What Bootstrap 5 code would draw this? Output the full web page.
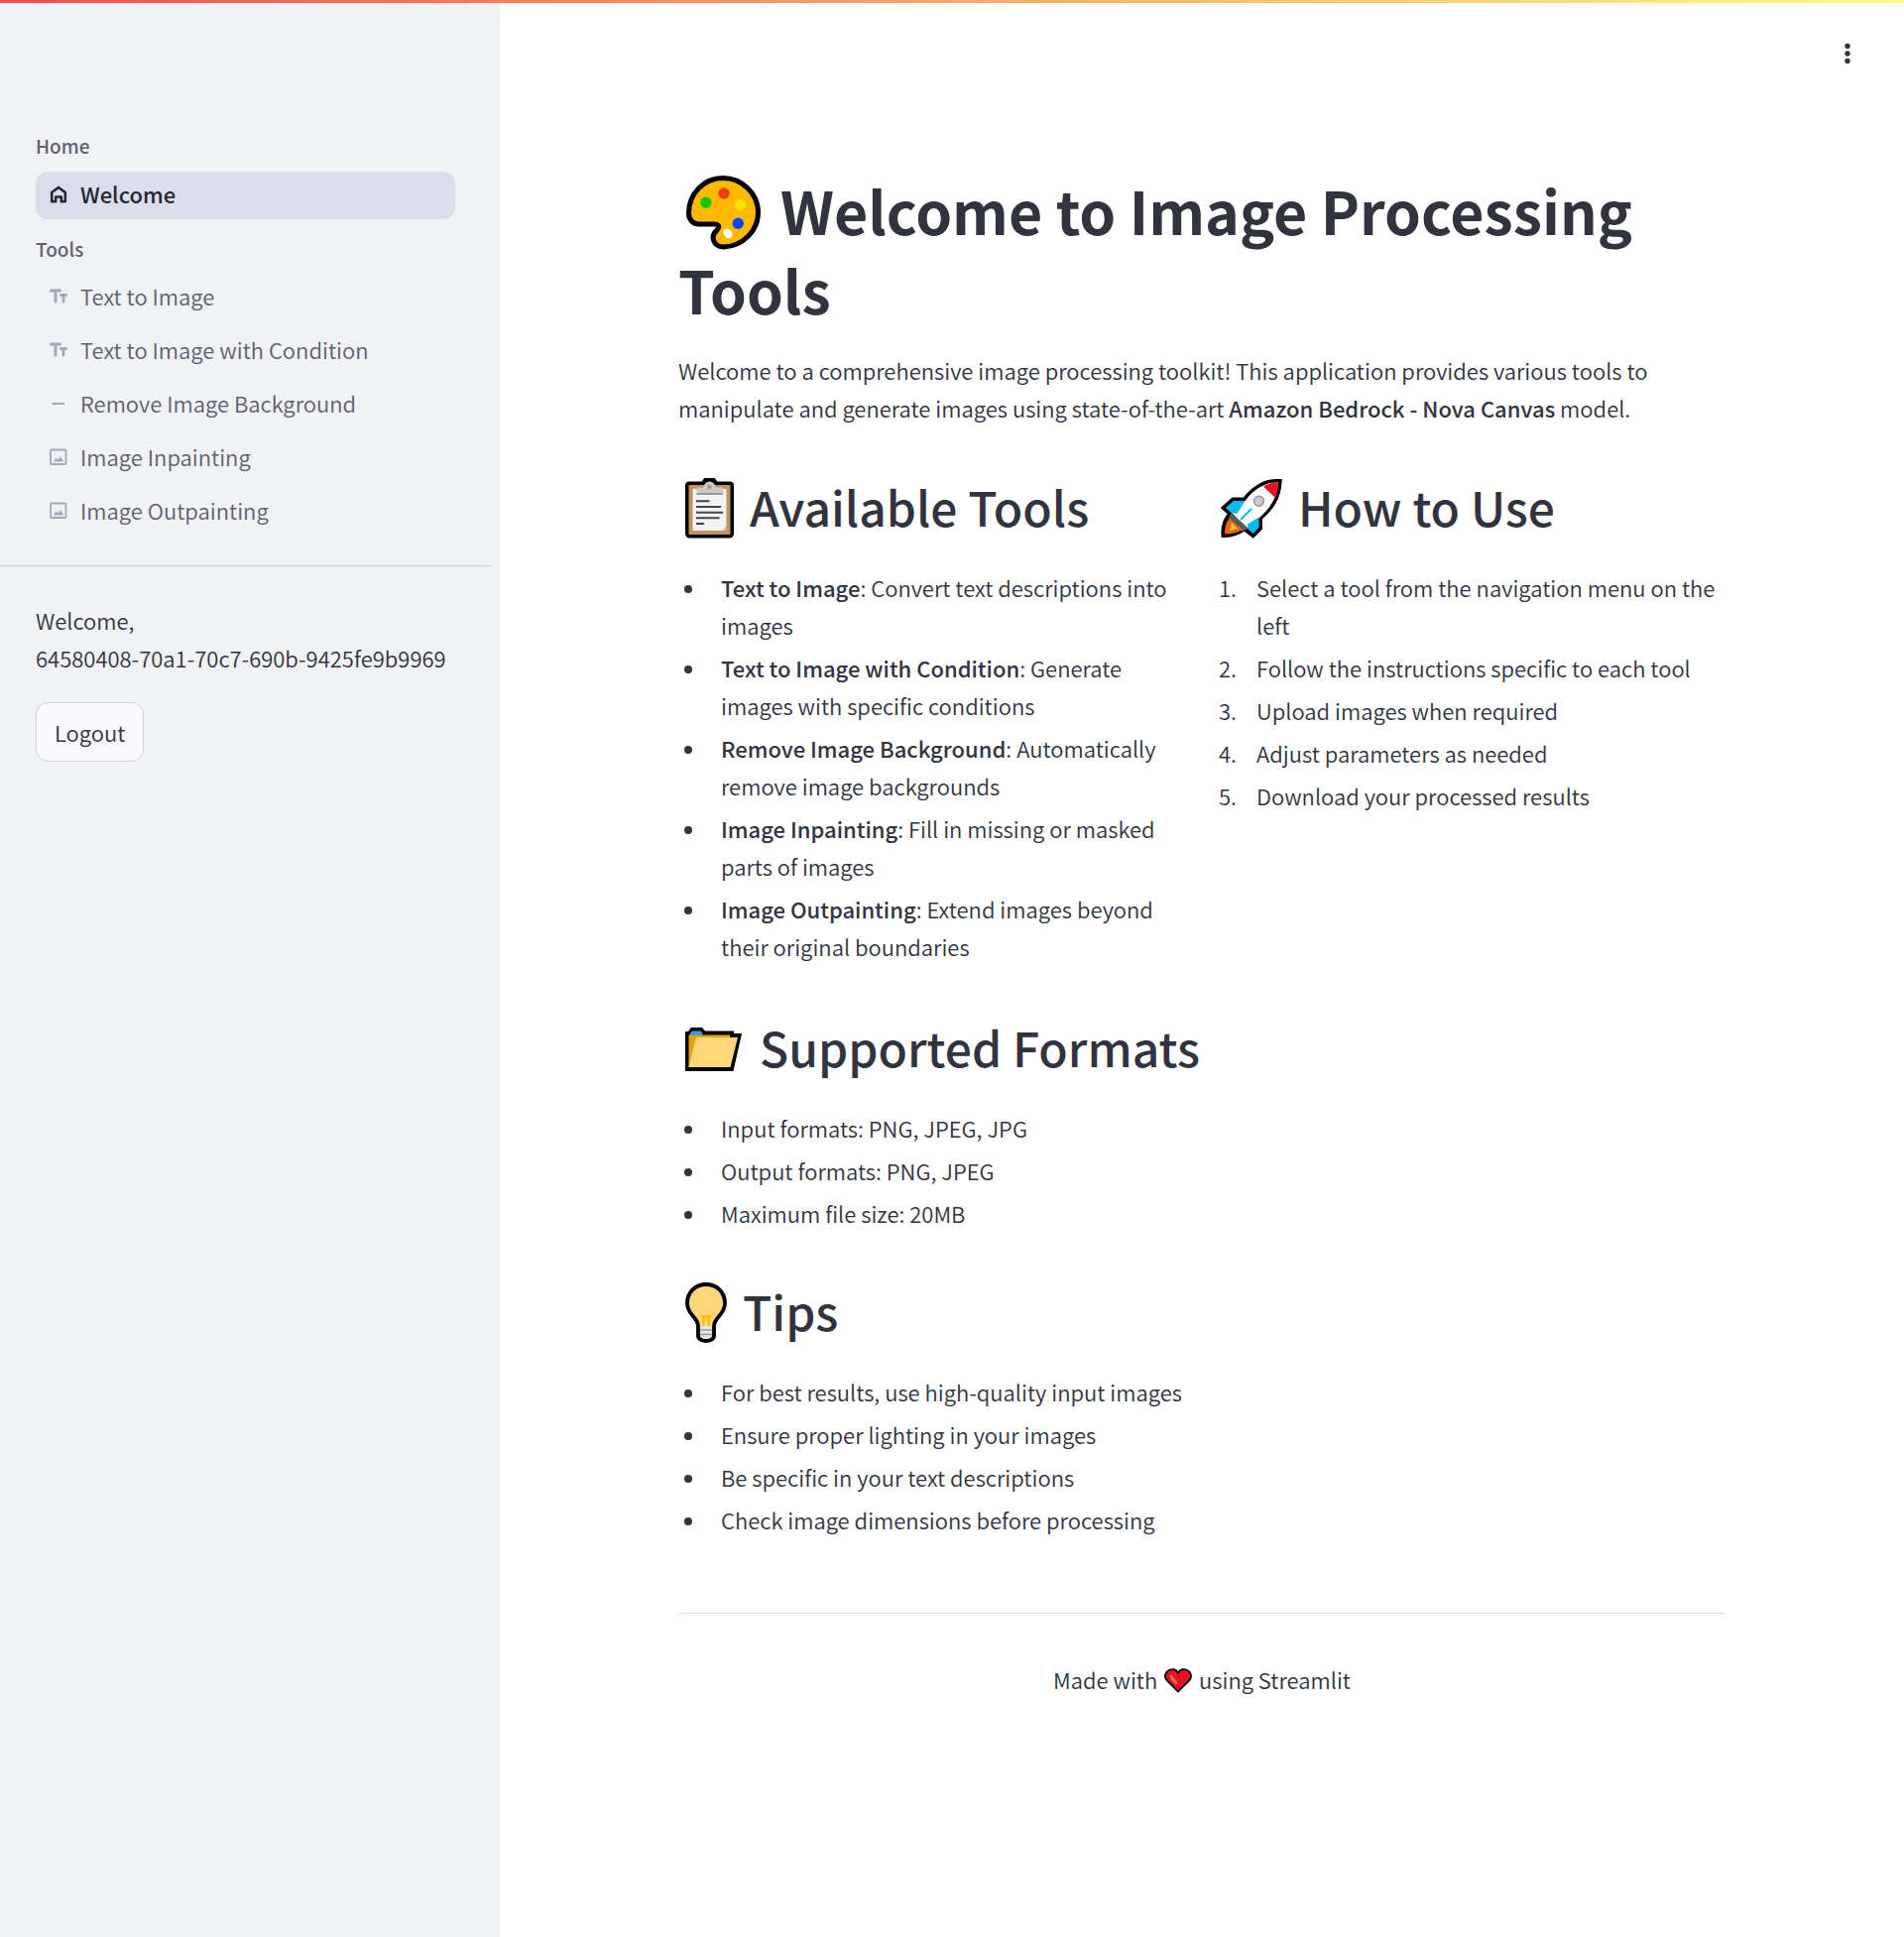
<!DOCTYPE html>
<html lang="en">
<head>
<meta charset="utf-8">
<meta name="viewport" content="width=device-width, initial-scale=1">
<title>Welcome to Image Processing Tools</title>
<link rel="stylesheet" href="https://cdn.jsdelivr.net/npm/bootstrap@5.3.0/dist/css/bootstrap.min.css">
<style>
  body { font-family: "Noto Sans CJK SC", "Noto Sans", sans-serif; font-size: 22px; font-weight: 350; line-height: 38px; color: #31333f; }
  .top-stripe { height: 3px; background: linear-gradient(90deg, #ff4b4b, #fffd80); z-index: 5; }
  .side-panel { width: 504px; background: #f0f2f6; padding-top: 128px; }
  .side-heading { font-size: 19px; line-height: 38px; font-weight: 500; color: #5f616f; margin: 0; }
  .side-nav { padding: 7px 45px 11px 36px; gap: 6px; }
  .tools-nav { padding-top: 6px; }
  .side-link { height: 48px; padding: 0 11px 4px; gap: 10px; border-radius: 12px; color: #5d5f6e; text-decoration: none; }
  .side-link svg { width: 24px; height: 24px; flex: none; color: #a3a8b8; }
  .side-link.active { background: #dadee9; color: #262730; font-weight: 500; }
  .side-link.active svg { color: #262730; }
  .side-rule { margin: 19px 9px 35px 0; border-top: 1px solid #c9cbd1; opacity: 1; }
  .user-note { margin-bottom: 26px; }
  .btn-logout { --bs-btn-font-size: 22px; --bs-btn-font-weight: 350; --bs-btn-line-height: 38px; --bs-btn-padding-x: 18px; --bs-btn-padding-y: 10px;
    --bs-btn-color: #31333f; --bs-btn-bg: #f9f9fb; --bs-btn-border-color: #cfd1d6; --bs-btn-border-radius: 12px;
    --bs-btn-hover-border-color: #ff4b4b; --bs-btn-hover-color: #ff4b4b; }
  .menu-btn { top: 33px; right: 36px; width: 42px; height: 42px; color: #31333f; }
  .page-body { max-width: 1104px; padding: 172px 24px 120px; }
  h1 { font-size: 59px; line-height: 79px; font-weight: 700; margin: 0 0 23px; }
  h2 { font-size: 48px; line-height: 65px; font-weight: 500; margin: 0 0 30px; }
  h1 svg { margin: 0 20px 0 8px; vertical-align: -15px; }
  h2 svg { margin: 0 16px 0 7px; vertical-align: -12px; }
  h2 .icon-folder { vertical-align: -4px; }
  .intro { margin-bottom: 48px; }
  strong { font-weight: 500; }
  .doc-list { padding-left: 43px; margin-bottom: 47px; list-style: none; }
  .doc-list li { margin-bottom: 5px; }
  .tool-row { margin-bottom: 3px; }
  ul.doc-list li::before { content: ""; float: left; width: 8px; height: 8px; margin: 17px 0 0 -37px; border-radius: 50%; background: #31333f; }
  ol.doc-list { counter-reset: step; }
  ol.doc-list li { counter-increment: step; }
  ol.doc-list li::before { content: counter(step) "."; float: left; margin-left: -38px; }
  .foot-rule { margin: 75px 0 47px; border-top: 1px solid #dedfe3; opacity: 1; }
  .heart { margin: 0 2px; vertical-align: -4px; }
</style>
</head>
<body>
<div class="top-stripe fixed-top"></div>
<div class="d-flex min-vh-100">
  <aside class="side-panel flex-shrink-0">
    <nav aria-label="Pages">
      <h6 class="side-heading ps-4 ms-2 me-0"><span class="ms-1">Home</span></h6>
      <div class="side-nav d-flex flex-column">
        <a href="#" class="side-link active d-flex align-items-center" aria-current="page">
          <svg viewBox="0 0 24 24" fill="none" stroke="currentColor" stroke-width="2.600" stroke-linejoin="round" aria-hidden="true"><path d="M5.200 11 12 6l6.800 5v9.200h-4v-4.700H9.200v4.700h-4z"/></svg>
          Welcome</a>
      </div>
      <h6 class="side-heading ps-4 ms-2"><span class="ms-1">Tools</span></h6>
      <div class="side-nav tools-nav d-flex flex-column">
        <a href="#" class="side-link d-flex align-items-center">
          <svg viewBox="0 0 24 24" fill="none" stroke="currentColor" stroke-width="3" stroke-linecap="round" aria-hidden="true"><path d="M4.500 7h9M9 7v11"/><path stroke-width="2.800" d="M14.400 11.500h5.200M17 11.500V18"/></svg>
          Text to Image</a>
        <a href="#" class="side-link d-flex align-items-center">
          <svg viewBox="0 0 24 24" fill="none" stroke="currentColor" stroke-width="3" stroke-linecap="round" aria-hidden="true"><path d="M4.500 7h9M9 7v11"/><path stroke-width="2.800" d="M14.400 11.500h5.200M17 11.500V18"/></svg>
          Text to Image with Condition</a>
        <a href="#" class="side-link d-flex align-items-center">
          <svg viewBox="0 0 24 24" fill="none" stroke="currentColor" stroke-width="2" stroke-linecap="round" aria-hidden="true"><path d="M6.500 13h11"/></svg>
          Remove Image Background</a>
        <a href="#" class="side-link d-flex align-items-center">
          <svg viewBox="0 0 24 24" fill="none" stroke="currentColor" stroke-width="1.800" aria-hidden="true"><rect x="4" y="5.500" width="15.500" height="14.500" rx="1"/><path fill="currentColor" stroke="none" d="M7 17.500l2.500-4 2 2 2.500-3.500 3.200 5.500z"/></svg>
          Image Inpainting</a>
        <a href="#" class="side-link d-flex align-items-center">
          <svg viewBox="0 0 24 24" fill="none" stroke="currentColor" stroke-width="1.800" aria-hidden="true"><rect x="4" y="5.500" width="15.500" height="14.500" rx="1"/><path fill="currentColor" stroke="none" d="M7 17.500l2.500-4 2 2 2.500-3.500 3.200 5.500z"/></svg>
          Image Outpainting</a>
      </div>
    </nav>
    <hr class="side-rule">
    <div class="ps-4 ms-2">
      <div class="ms-1">
        <p class="user-note">Welcome,<br>64580408-70a1-70c7-690b-9425fe9b9969</p>
        <button type="button" class="btn btn-logout">Logout</button>
      </div>
    </div>
  </aside>

  <main class="flex-grow-1">
    <button type="button" class="menu-btn btn p-0 border-0 position-absolute" aria-label="Main menu">
      <svg class="d-block mx-auto" width="42" height="42" viewBox="0 0 42 42" fill="currentColor" aria-hidden="true"><circle cx="21" cy="13.500" r="2.700"/><circle cx="21" cy="21" r="2.700"/><circle cx="21" cy="28.500" r="2.700"/></svg>
    </button>
    <div class="page-body mx-auto">
      <h1><svg width="75" height="75" viewBox="0 0 75 75" aria-hidden="true">
        <path fill="#ffb900" stroke="#000" stroke-width="5" stroke-linejoin="round" d="M37 2.500C18 2.500 2.500 18 2.500 38c0 6 4 11 10 11H28c5 0 6 3 3 6-7 6-4 17 7 17 19-1 34.500-16 34.500-35S56 2.500 37 2.500z"/>
        <circle cx="38" cy="18" r="5.700" fill="#f03a17"/><circle cx="19.800" cy="27.300" r="5.700" fill="#16c60c"/><circle cx="54.600" cy="29.500" r="5.700" fill="#fce100"/><circle cx="52.300" cy="48.200" r="5.700" fill="#0046ff"/><ellipse cx="42" cy="58.500" rx="4" ry="5.200" fill="#fff" transform="rotate(-38 42 58.500)"/>
      </svg>Welcome to Image Processing Tools</h1>
      <p class="intro">Welcome to a comprehensive image processing toolkit! This application provides various tools to manipulate and generate images using state-of-the-art <strong>Amazon Bedrock - Nova Canvas</strong> model.</p>

      <div class="row tool-row">
        <section class="col-6">
          <h2><svg width="49" height="61" viewBox="0 0 49 61" aria-hidden="true">
            <path d="M4 3.500h13a8 8 0 0 1 15 0h13a4 4 0 0 1 4 4V56a4.500 4.500 0 0 1-4.500 4.500h-40A4.500 4.500 0 0 1 0 56V7.500a4 4 0 0 1 4-4z"/>
            <rect x="3.500" y="7" width="42" height="50" rx="1" fill="#c19360"/>
            <path fill="#f2f2f2" d="M7.500 11h34v38l-4 4h-30z"/><path fill="#d2c2b0" d="M41.500 49v4h-4z"/>
            <path fill="#c9c9c9" d="M11.500 9.500h7a6 6 0 0 1 12 0h7.500V15H11.500z"/><path fill="#999" d="M11.500 15H38v2H11.500z"/><circle cx="24.500" cy="9" r="2.200" fill="#c19360"/>
            <path stroke="#444447" stroke-width="2" d="M11 23.300h13.500M11 29h25M11 34.700h27M11 40.300h23.500M11 46h8"/>
          </svg>Available Tools</h2>
          <ul class="doc-list">
            <li><strong>Text to Image</strong>: Convert text descriptions into images</li>
            <li><strong>Text to Image with Condition</strong>: Generate images with specific conditions</li>
            <li><strong>Remove Image Background</strong>: Automatically remove image backgrounds</li>
            <li><strong>Image Inpainting</strong>: Fill in missing or masked parts of images</li>
            <li><strong>Image Outpainting</strong>: Extend images beyond their original boundaries</li>
          </ul>
        </section>
        <section class="col-6">
          <h2><svg width="62" height="61" viewBox="0 0 62 61" aria-hidden="true">
            <path fill="#fff" stroke="#000" stroke-width="7" d="M58 4.500C43 4 32 13 24.500 23H13l-8 7 6.500 6c-5 5-8 12-7.500 20.500 7 0 13-2 20-7l8.500 6.500 6-6V39.500C50 30 57 20 58 4.500z"/>
            <path fill="#fff" d="M58 4.500C43 4 32 13 24.500 23L11 35l16 16 12-11C50 30 57 20 58 4.500z"/>
            <path fill="#00bcf2" d="M24.500 23H13l-8 7 5.500 5 6 1zM38.500 39.500V50l-6 6-5-4.500-.500-5z"/>
            <path fill="#e81123" d="M58 4.500C52 4.500 47 6 43 8.500L55 20c2-5 3-10 3-15.500z"/>
            <path fill="#505b60" d="M10.500 34.500 28 51l-7 3L8 41z"/>
            <path fill="#f7630c" d="M8.500 40.500 22 52c-5 3-11 4.500-18 4.500 0-6 1-11 4.500-16z"/>
            <path fill="#ffc83d" d="M11 45l6 6-8 2z"/>
            <circle cx="38.500" cy="23.300" r="5" fill="#ccc" stroke="#999" stroke-width="1.500"/>
            <path stroke="#00bcf2" stroke-width="2" d="M20 42 31 31"/>
          </svg>How to Use</h2>
          <ol class="doc-list">
            <li>Select a tool from the navigation menu on the left</li>
            <li>Follow the instructions specific to each tool</li>
            <li>Upload images when required</li>
            <li>Adjust parameters as needed</li>
            <li>Download your processed results</li>
          </ol>
        </section>
      </div>

      <section>
        <h2><svg class="icon-folder" width="59" height="44" viewBox="0 0 59 44" aria-hidden="true">
          <path d="M0 4h3l3-4h11l3 3.500h29V6h8l-8.500 38H0z"/>
          <path fill="#e8a200" d="M3.500 7.500H45V12L13 40H3.500z"/><path fill="#4895d9" d="M5 8V5.500L7 3.500h9L18 8z"/><path fill="#ffd679" d="M11 10h42l-7.500 30h-42z"/>
        </svg>Supported Formats</h2>
        <ul class="doc-list">
          <li>Input formats: PNG, JPEG, JPG</li>
          <li>Output formats: PNG, JPEG</li>
          <li>Maximum file size: 20MB</li>
        </ul>
      </section>
      <section>
        <h2><svg width="42" height="61" viewBox="0 0 42 61" aria-hidden="true">
          <path fill="#ffd679" stroke="#000" stroke-width="3.800" d="M21 2C10 2 2 10 2 21c0 12 11 14 11 23v10c0 3 4 5 8 5s8-2 8-5V44c0-9 11-11 11-23C40 10 32 2 21 2z"/>
          <path fill="#e6e6e6" d="M15 43.500h12V53l-3 4h-6l-3-4z"/><path stroke="#999" stroke-width="1.500" d="M15 48h12M15 52.500h12"/>
          <path fill="none" stroke="#ffb900" stroke-width="2.200" d="M15.500 34.500h11M18.500 33v11M23.700 33v11"/>
        </svg>Tips</h2>
        <ul class="doc-list mb-0">
          <li>For best results, use high-quality input images</li>
          <li>Ensure proper lighting in your images</li>
          <li>Be specific in your text descriptions</li>
          <li>Check image dimensions before processing</li>
        </ul>
      </section>
      <hr class="foot-rule">
      <footer class="text-center">Made with <svg class="heart" width="28" height="25" viewBox="0 0 28 25" aria-hidden="true">
        <path fill="#e81123" stroke="#000" stroke-width="1.800" d="M14 23.500 3 12.500C-.5 9 1 4.500 4 2.500 7.500 0 12 1 14 4.500 16 1 20.500 0 24 2.500c3 2 4.500 6.500 1 10z"/>
        <path stroke="#f0685a" stroke-width="3" stroke-linecap="round" d="M7 8c1 3 3 5 5 7"/>
      </svg> using Streamlit</footer>
    </div>
  </main>
</div>
<script src="https://cdn.jsdelivr.net/npm/bootstrap@5.3.0/dist/js/bootstrap.bundle.min.js"></script>
</body>
</html>
